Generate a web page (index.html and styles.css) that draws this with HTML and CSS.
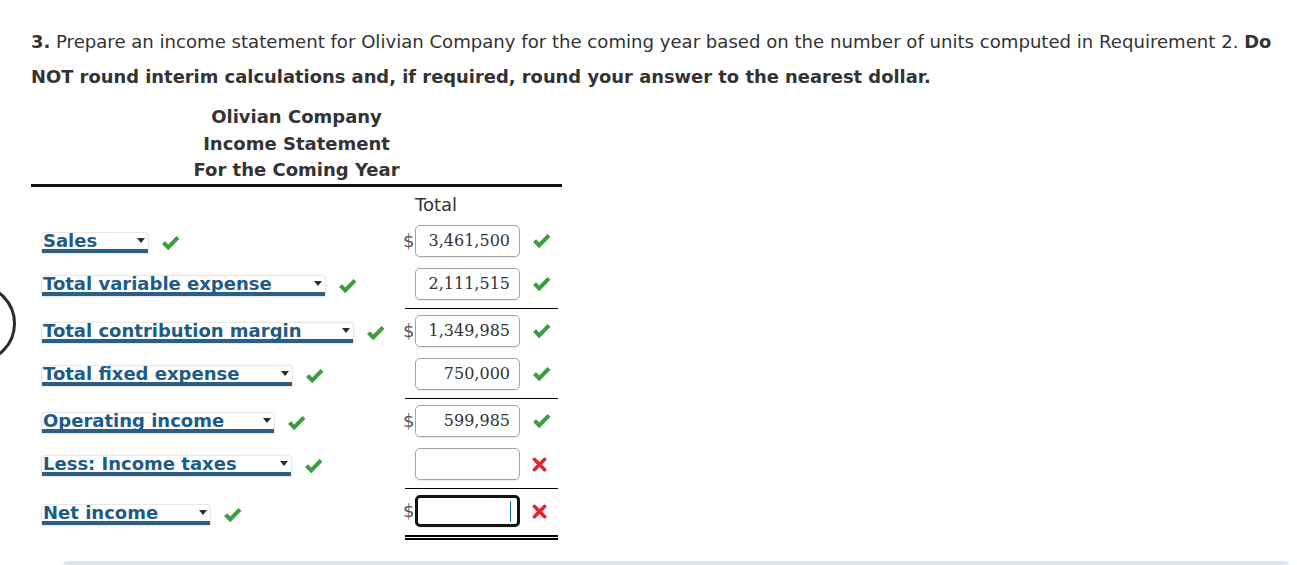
FILE: index.html
```html
<!DOCTYPE html>
<html lang="en">
<head>
<meta charset="utf-8">
<title>Income Statement</title>
<link rel="stylesheet" href="styles.css">
</head>
<body>
<div class="ring"></div>
<main class="page">
  <p class="prompt"><b>3.</b> Prepare an income statement for Olivian Company for the coming year based on the number of units computed in Requirement 2. <b>Do NOT round interim calculations and, if required, round your answer to the nearest dollar.</b></p>

  <section class="stmt">
    <header class="stmt-head">
      <div>Olivian Company</div>
      <div>Income Statement</div>
      <div>For the Coming Year</div>
    </header>
    <div class="col-head"><span class="col-total">Total</span></div>

    <div class="row">
      <div class="label"><span class="sel sel-sales">Sales<i class="arrow"></i></span><svg class="ok" viewBox="0 0 20 17"><path d="M1 9.6 L4.2 6.6 L7.6 10.2 L16.4 1 L19.5 4.1 L7.6 16.2 Z"/></svg></div>
      <span class="cur">$</span>
      <div class="amt">3,461,500</div>
      <div class="mark"><svg class="ok" viewBox="0 0 20 17"><path d="M1 9.6 L4.2 6.6 L7.6 10.2 L16.4 1 L19.5 4.1 L7.6 16.2 Z"/></svg></div>
    </div>

    <div class="row">
      <div class="label"><span class="sel sel-var">Total variable expense<i class="arrow"></i></span><svg class="ok" viewBox="0 0 20 17"><path d="M1 9.6 L4.2 6.6 L7.6 10.2 L16.4 1 L19.5 4.1 L7.6 16.2 Z"/></svg></div>
      <span class="cur"></span>
      <div class="amt">2,111,515</div>
      <div class="mark"><svg class="ok" viewBox="0 0 20 17"><path d="M1 9.6 L4.2 6.6 L7.6 10.2 L16.4 1 L19.5 4.1 L7.6 16.2 Z"/></svg></div>
    </div>
    <div class="rule"></div>

    <div class="row">
      <div class="label"><span class="sel sel-cm">Total contribution margin<i class="arrow"></i></span><svg class="ok" viewBox="0 0 20 17"><path d="M1 9.6 L4.2 6.6 L7.6 10.2 L16.4 1 L19.5 4.1 L7.6 16.2 Z"/></svg></div>
      <span class="cur">$</span>
      <div class="amt">1,349,985</div>
      <div class="mark"><svg class="ok" viewBox="0 0 20 17"><path d="M1 9.6 L4.2 6.6 L7.6 10.2 L16.4 1 L19.5 4.1 L7.6 16.2 Z"/></svg></div>
    </div>

    <div class="row">
      <div class="label"><span class="sel sel-fixed">Total fixed expense<i class="arrow"></i></span><svg class="ok" viewBox="0 0 20 17"><path d="M1 9.6 L4.2 6.6 L7.6 10.2 L16.4 1 L19.5 4.1 L7.6 16.2 Z"/></svg></div>
      <span class="cur"></span>
      <div class="amt">750,000</div>
      <div class="mark"><svg class="ok" viewBox="0 0 20 17"><path d="M1 9.6 L4.2 6.6 L7.6 10.2 L16.4 1 L19.5 4.1 L7.6 16.2 Z"/></svg></div>
    </div>
    <div class="rule"></div>

    <div class="row">
      <div class="label"><span class="sel sel-op">Operating income<i class="arrow"></i></span><svg class="ok" viewBox="0 0 20 17"><path d="M1 9.6 L4.2 6.6 L7.6 10.2 L16.4 1 L19.5 4.1 L7.6 16.2 Z"/></svg></div>
      <span class="cur">$</span>
      <div class="amt">599,985</div>
      <div class="mark"><svg class="ok" viewBox="0 0 20 17"><path d="M1 9.6 L4.2 6.6 L7.6 10.2 L16.4 1 L19.5 4.1 L7.6 16.2 Z"/></svg></div>
    </div>

    <div class="row">
      <div class="label"><span class="sel sel-tax">Less: Income taxes<i class="arrow"></i></span><svg class="ok" viewBox="0 0 20 17"><path d="M1 9.6 L4.2 6.6 L7.6 10.2 L16.4 1 L19.5 4.1 L7.6 16.2 Z"/></svg></div>
      <span class="cur"></span>
      <div class="amt"></div>
      <div class="mark"><svg class="bad" viewBox="0 0 16 16"><path d="M2.5 2.5 L13.5 13.5 M13.5 2.5 L2.5 13.5"/></svg></div>
    </div>
    <div class="rule"></div>

    <div class="row row-last">
      <div class="label"><span class="sel sel-net">Net income<i class="arrow"></i></span><svg class="ok" viewBox="0 0 20 17"><path d="M1 9.6 L4.2 6.6 L7.6 10.2 L16.4 1 L19.5 4.1 L7.6 16.2 Z"/></svg></div>
      <span class="cur">$</span>
      <div class="amt amt-focus"><span class="caret"></span></div>
      <div class="mark"><svg class="bad" viewBox="0 0 16 16"><path d="M2.5 2.5 L13.5 13.5 M13.5 2.5 L2.5 13.5"/></svg></div>
    </div>
    <div class="rule-double"></div>
  </section>
</main>
<div class="panel"></div>
</body>
</html>
```

FILE: styles.css
```css
html, body {
  margin: 0;
  padding: 0;
  background: #fff;
}
body {
  font-family: "DejaVu Sans", Verdana, sans-serif;
  font-size: 18px;
  color: #333;
  overflow: hidden;
  position: relative;
}
.ring {
  position: absolute;
  left: -63px;
  top: 284px;
  width: 79px;
  height: 79px;
  box-sizing: border-box;
  border: 3.5px solid #2a2a2a;
  border-radius: 50%;
}
.page {
  padding: 24px 0 0 31px;
}
.prompt {
  margin: 0;
  font-size: 18.1px;
  line-height: 35px;
  width: 1260px;
}
.prompt b {
  font-size: 17.9px;
}
.stmt {
  width: 531px;
  margin-top: 10px;
}
.stmt-head {
  text-align: center;
  font-weight: bold;
  font-size: 18px;
  line-height: 26.5px;
  border-bottom: 3px solid #111;
}
.col-head {
  height: 33px;
  box-sizing: border-box;
  padding: 3px 0 0 384px;
  display: flex;
  align-items: center;
  font-size: 18px;
}
.row {
  height: 43px;
  display: grid;
  grid-template-columns: 373px 11px 105px 1fr;
  align-items: center;
}
.label {
  display: flex;
  align-items: center;
  gap: 13px;
  padding: 3px 0 0 11px;
}
.row-last .label {
  padding-top: 8px;
}
.sel {
  display: inline-flex;
  align-items: center;
  justify-content: space-between;
  box-sizing: border-box;
  height: 20px;
  padding: 0 3px 0 1px;
  background: #fff;
  border-bottom: 4px solid #2d5e84;
  border-radius: 3px 3px 0 0;
  box-shadow: 0 0 2px rgba(0, 0, 0, 0.35);
  font-weight: bold;
  font-size: 18px;
  line-height: 16px;
  color: #1d5b88;
  white-space: nowrap;
}
.sel-sales { width: 106px; }
.sel-var { width: 283px; }
.sel-cm { width: 311px; }
.sel-fixed { width: 250px; }
.sel-op { width: 232px; }
.sel-tax { width: 249px; }
.sel-net { width: 168px; }
.arrow {
  width: 0;
  height: 0;
  border-left: 4px solid transparent;
  border-right: 4px solid transparent;
  border-top: 5px solid #2b2b2b;
  margin-top: -1px;
}
.ok {
  width: 19px;
  height: 16px;
  fill: #3e9b3e;
  flex: none;
}
.bad {
  width: 15px;
  height: 15px;
  stroke: #e6252b;
  stroke-width: 3.8;
  stroke-linecap: round;
  fill: none;
}
.cur {
  font-size: 18px;
  color: #555;
  line-height: 20px;
  margin-left: -1px;
}
.amt {
  box-sizing: border-box;
  height: 32px;
  border: 1px solid #a3a3a3;
  border-radius: 5px;
  box-shadow: 0 1px 1px rgba(0, 0, 0, 0.08);
  text-align: right;
  padding-right: 9px;
  font-family: "DejaVu Serif", Georgia, serif;
  font-size: 16px;
  line-height: 30px;
  color: #333;
}
.amt-focus {
  border: 3px solid #141414;
  display: flex;
  justify-content: flex-end;
  align-items: center;
  padding-right: 6px;
}
.caret {
  width: 1.5px;
  height: 21px;
  background: #1f6e8c;
}
.mark {
  display: flex;
  align-items: center;
  padding-left: 12px;
}
.rule {
  margin: 2px 0 1px 374px;
  width: 153px;
  border-top: 1px solid #000;
}
.rule-double {
  margin: 2px 0 0 374px;
  width: 153px;
  border-top: 5px double #000;
}
.panel {
  margin: 21px 7px 0 62px;
  height: 40px;
  background: #dfe5ea;
  border-radius: 6px 6px 0 0;
}
```
